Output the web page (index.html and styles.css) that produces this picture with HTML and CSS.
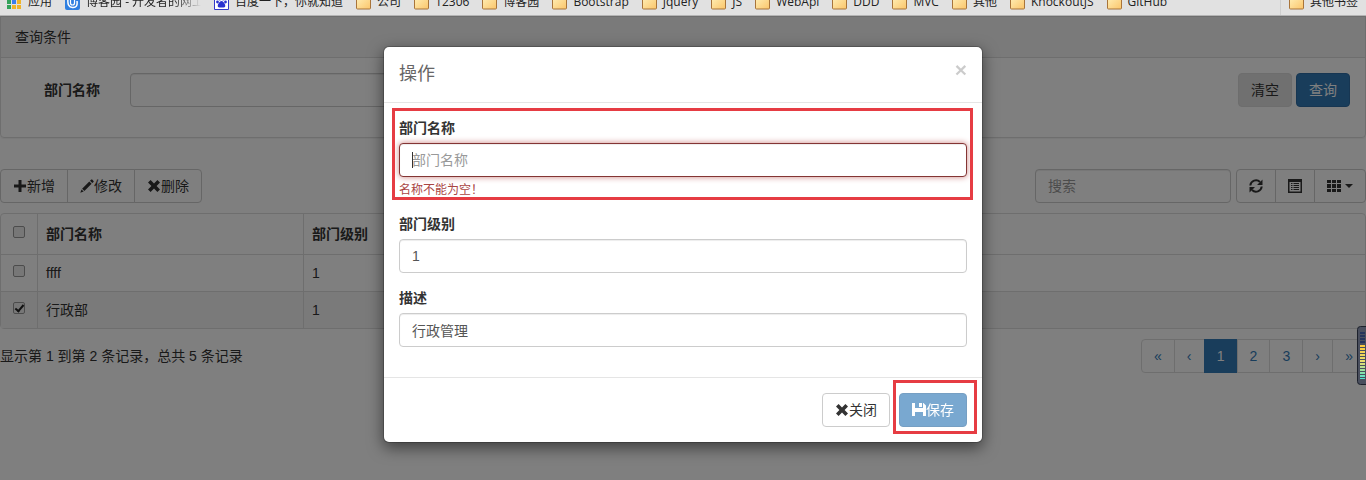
FILE: index.html
```html
<!DOCTYPE html>
<html lang="zh-CN">
<head>
    <meta charset="UTF-8">
    <meta name="viewport" content="width=device-width, initial-scale=1.0">
    <title>部门管理</title>
    <link rel="stylesheet" href="styles.css">
</head>
<body>
    <!-- 图标 -->
    <svg class="sprite" aria-hidden="true">
        <linearGradient id="folder-fill" x1="0" y1="0" x2="1" y2="1">
            <stop offset="0" stop-color="#fff0b8"/>
            <stop offset="1" stop-color="#fbc56a"/>
        </linearGradient>
        <linearGradient id="meter-fill" x1="0" y1="0" x2="0" y2="1">
            <stop offset="0" stop-color="#ffc93c"/>
            <stop offset=".5" stop-color="#e6e070"/>
            <stop offset="1" stop-color="#4fe0d0"/>
        </linearGradient>
        <symbol id="i-folder" viewBox="0 0 15 14">
            <path d="M.5 2.5q0-1 1-1h4l1 1.500h7q1 0 1 1v8.500q0 1-1 1h-12q-1 0-1-1z" fill="url(#folder-fill)" stroke="#a8743a"/>
        </symbol>
        <symbol id="i-plus" viewBox="0 0 14 14"><path d="M5.500 1h3v4.500H13v3H8.500V13h-3V8.500H1v-3h4.500z"/></symbol>
        <symbol id="i-pencil" viewBox="0 0 14 14"><path d="M11.200.6q.5-.4 1 0l1.300 1.300q.5.500 0 1l-1.200 1.200-2.300-2.300zM9.300 2.500l2.300 2.300-7.200 7.200-2.300-2.300zM1.500 10.400l2.200 2.200L.3 13.700z"/></symbol>
        <symbol id="i-remove" viewBox="0 0 14 14"><path d="M3.600 1L7 4.400 10.400 1 13 3.600 9.600 7 13 10.400 10.400 13 7 9.600 3.600 13 1 10.400 4.400 7 1 3.600z"/></symbol>
        <symbol id="i-save" viewBox="0 0 14 14"><path d="M0 0h3v5h8V0h.5L14 2.500V13h-3V9H3v4H0zM7 0h3v4H7z"/><path d="M2 5h10v4H2z"/></symbol>
        <symbol id="i-refresh" viewBox="0 0 14 14">
            <path d="M1.300 6.500A5.700 5.700 0 0 1 11 3M12.700 7.500A5.700 5.700 0 0 1 3 11" fill="none" stroke="currentColor" stroke-width="2"/>
            <path d="M13.500.5V6H8zM.5 13.500V8H6z"/>
        </symbol>
        <symbol id="i-list" viewBox="0 0 14 14">
            <path d="M0 0h14v14H0zM1.500 3v9.500h11V3z" fill-rule="evenodd"/>
            <path d="M3 4h1.500v1H3zM5.500 4H11v1H5.500zM3 6h1.500v1H3zM5.500 6H11v1H5.500zM3 8h1.500v1H3zM5.500 8H11v1H5.500zM3 10h1.500v1H3zM5.500 10H11v1H5.500z"/>
        </symbol>
        <symbol id="i-th" viewBox="0 0 14 14"><path d="M0 1h4v3H0zM5 1h4v3H5zM10 1h4v3h-4zM0 5h4v4H0zM5 5h4v4H5zM10 5h4v4h-4zM0 10h4v3H0zM5 10h4v3H5zM10 10h4v3h-4z"/></symbol>
    </svg>

    <nav class="bookmarks">
        <a href="#" class="bookmark">
            <svg viewBox="0 0 15 15"><path d="M0 0h4v4H0z" fill="#e0483e"/><path d="M5 0h4v4H5z" fill="#e0483e"/><path d="M10 0h4v4h-4z" fill="#e0483e"/><path d="M0 5h4v4H0z" fill="#34a35a"/><path d="M5 5h4v4H5z" fill="#3b7ded"/><path d="M10 5h4v4h-4zM5 10h4v4H5zM10 10h4v4h-4z" fill="#f0b429"/><path d="M0 10h4v4H0z" fill="#34a35a"/></svg>
            应用
        </a>
        <a href="#" class="bookmark bookmark-fade">
            <svg viewBox="0 0 15 15"><rect width="15" height="15" rx="2" fill="#2f7fe0"/><path d="M3 4q-1 8 4.500 8.500T12 6" fill="none" stroke="#fff" stroke-width="1.500"/><path d="M5.500 5v3q0 2 2 2t2-2V3" fill="none" stroke="#fff" stroke-width="1.200"/></svg>
            <span>博客园 - 开发者的网上家园</span>
        </a>
        <a href="#" class="bookmark">
            <svg viewBox="0 0 15 15"><path d="M.5.5h14v14H.5z" fill="#fff" stroke="#3238c8"/><path d="M7.500 6q2 0 3.500 3.500 1 3-1.500 3h-4q-2.500 0-1.500-3Q5.500 6 7.500 6z" fill="#2a32d0"/><circle cx="3.500" cy="7" r="1.400" fill="#2a32d0"/><circle cx="11.500" cy="7" r="1.400" fill="#2a32d0"/><circle cx="5.800" cy="4" r="1.400" fill="#2a32d0"/><circle cx="9.200" cy="4" r="1.400" fill="#2a32d0"/></svg>
            百度一下，你就知道
        </a>
        <a href="#" class="bookmark"><svg><use href="#i-folder"/></svg>公司</a>
        <a href="#" class="bookmark"><svg><use href="#i-folder"/></svg>12306</a>
        <a href="#" class="bookmark"><svg><use href="#i-folder"/></svg>博客园</a>
        <a href="#" class="bookmark"><svg><use href="#i-folder"/></svg>Bootstrap</a>
        <a href="#" class="bookmark"><svg><use href="#i-folder"/></svg>Jquery</a>
        <a href="#" class="bookmark"><svg><use href="#i-folder"/></svg>JS</a>
        <a href="#" class="bookmark"><svg><use href="#i-folder"/></svg>WebApi</a>
        <a href="#" class="bookmark"><svg><use href="#i-folder"/></svg>DDD</a>
        <a href="#" class="bookmark"><svg><use href="#i-folder"/></svg>MVC</a>
        <a href="#" class="bookmark"><svg><use href="#i-folder"/></svg>其他</a>
        <a href="#" class="bookmark"><svg><use href="#i-folder"/></svg>KnockoutJS</a>
        <a href="#" class="bookmark"><svg><use href="#i-folder"/></svg>GitHub</a>
        <a href="#" class="bookmark bookmark-other"><svg><use href="#i-folder"/></svg>其他书签</a>
    </nav>

    <main class="page">
        <section class="panel">
            <div class="panel-heading">查询条件</div>
            <form class="panel-body">
                <label for="search-name">部门名称</label>
                <input type="text" class="form-control" id="search-name">
                <div class="query-buttons">
                    <button type="button" class="btn btn-gray">清空</button>
                    <button type="button" class="btn btn-primary">查询</button>
                </div>
            </form>
        </section>

        <div class="toolbar">
            <div class="btn-group">
                <button type="button" class="btn"><svg class="icon"><use href="#i-plus"/></svg>新增</button>
                <button type="button" class="btn"><svg class="icon"><use href="#i-pencil"/></svg>修改</button>
                <button type="button" class="btn"><svg class="icon"><use href="#i-remove"/></svg>删除</button>
            </div>
            <div class="toolbar-right">
                <input type="text" class="form-control" placeholder="搜索" aria-label="搜索">
                <div class="btn-group">
                    <button type="button" class="btn" aria-label="刷新"><svg class="icon"><use href="#i-refresh"/></svg></button>
                    <button type="button" class="btn" aria-label="切换"><svg class="icon"><use href="#i-list"/></svg></button>
                    <button type="button" class="btn" aria-label="列"><svg class="icon"><use href="#i-th"/></svg><span class="caret"></span></button>
                </div>
            </div>
        </div>

        <div class="table-box">
            <table>
                <colgroup>
                    <col class="col-check">
                    <col class="col-name">
                    <col class="col-level">
                    <col>
                </colgroup>
                <thead>
                    <tr>
                        <th class="check"><input type="checkbox" aria-label="全选"></th>
                        <th>部门名称</th>
                        <th>部门级别</th>
                        <th>描述</th>
                    </tr>
                </thead>
                <tbody>
                    <tr>
                        <td class="check"><input type="checkbox" aria-label="ffff"></td>
                        <td>ffff</td>
                        <td>1</td>
                        <td></td>
                    </tr>
                    <tr class="selected">
                        <td class="check"><input type="checkbox" aria-label="行政部" checked></td>
                        <td>行政部</td>
                        <td>1</td>
                        <td>行政管理</td>
                    </tr>
                </tbody>
            </table>
        </div>

        <div class="table-footer">
            <span>显示第 1 到第 2 条记录，总共 5 条记录</span>
            <nav class="pagination">
                <a href="#">«</a>
                <a href="#">‹</a>
                <a href="#" class="active">1</a>
                <a href="#">2</a>
                <a href="#">3</a>
                <a href="#">›</a>
                <a href="#">»</a>
            </nav>
        </div>

        <!-- 编辑弹窗 -->
        <div class="backdrop">
            <div class="modal" role="dialog" aria-labelledby="modal-title">
                <div class="modal-header">
                    <h4 id="modal-title">操作</h4>
                    <button type="button" class="close" aria-label="关闭">×</button>
                </div>
                <div class="modal-body">
                    <div class="form-group has-error marked">
                        <label for="name">部门名称</label>
                        <div class="input-wrap">
                            <input type="text" class="form-control" id="name" placeholder="部门名称">
                            <span class="text-cursor"></span>
                        </div>
                        <small class="help-block">名称不能为空！</small>
                    </div>
                    <div class="form-group">
                        <label for="level">部门级别</label>
                        <input type="text" class="form-control" id="level" value="1">
                    </div>
                    <div class="form-group">
                        <label for="desc">描述</label>
                        <input type="text" class="form-control" id="desc" value="行政管理">
                    </div>
                </div>
                <div class="modal-footer">
                    <button type="button" class="btn"><svg class="icon"><use href="#i-remove"/></svg>关闭</button>
                    <div class="save marked">
                        <button type="button" class="btn btn-primary" disabled><svg class="icon"><use href="#i-save"/></svg>保存</button>
                    </div>
                </div>
            </div>
        </div>

        <svg class="meter" viewBox="0 0 9 59" aria-hidden="true">
            <rect x=".5" y=".5" width="12" height="58" rx="3" fill="#4a4f5e" stroke="#1d212c"/>
            <path d="M5.500 6v12" stroke="#26345c" stroke-width="5" stroke-dasharray="2 1"/>
            <rect x="3" y="19" width="5" height="34" fill="url(#meter-fill)"/>
            <path d="M5.500 21v32" stroke="#4a4f5e" stroke-width="5" stroke-dasharray="1 2"/>
        </svg>
    </main>
</body>
</html>
```

FILE: styles.css
```css
* {
    box-sizing: border-box;
}

html, body {
    height: 100%;
}

body {
    margin: 0;
    display: flex;
    flex-direction: column;
    overflow: hidden;
    font-family: "Liberation Sans", "Noto Sans CJK SC", sans-serif;
    font-size: 14px;
    line-height: 20px;
    color: #333;
    background: #fff;
}

input, button {
    font-family: inherit;
    font-size: 14px;
    line-height: 20px;
}

.sprite {
    position: absolute;
    width: 0;
    height: 0;
}

/* 书签栏 */
.bookmarks {
    display: flex;
    align-items: flex-end;
    gap: 13px;
    height: 16px;
    flex-shrink: 0;
    padding: 0 8px 0 7px;
    overflow: hidden;
    background: #e1e1e1;
    border-bottom: 1px solid #b4b4b4;
    font-family: "Open Sans", "Noto Sans CJK SC", sans-serif;
    font-size: 12px;
    line-height: 26px;
}

.bookmark {
    display: flex;
    align-items: center;
    gap: 6px;
    height: 26px;
    color: #222;
    text-decoration: none;
    white-space: nowrap;
}

.bookmark svg {
    width: 15px;
    height: 15px;
    flex-shrink: 0;
}

.bookmark-fade {
    width: 136px;
    overflow: hidden;
    -webkit-mask-image: linear-gradient(to right, #000 80%, transparent);
    mask-image: linear-gradient(to right, #000 80%, transparent);
}

.bookmark-other {
    margin-left: auto;
    padding-left: 8px;
    border-left: 1px solid #cfcfcf;
}

/* 页面 */
.page {
    position: relative;
    flex: 1;
}

.panel {
    margin-bottom: 31px;
    border: 1px solid #ddd;
    border-radius: 0 0 4px 4px;
    box-shadow: 0 1px 1px rgba(0, 0, 0, 0.05);
}

.panel-heading {
    padding: 10px 14px;
    background: #f5f5f5;
    border-bottom: 1px solid #ddd;
}

.panel-body {
    display: flex;
    padding: 15px 15px 30px;
}

.panel-body label {
    width: 84px;
    margin-right: 30px;
    padding-top: 7px;
    text-align: right;
    font-weight: bold;
}

.panel-body .form-control {
    width: 25%;
}

.query-buttons {
    display: flex;
    gap: 4px;
    margin-left: auto;
}

.form-control {
    display: block;
    width: 100%;
    height: 34px;
    padding: 6px 12px;
    color: #555;
    background: #fff;
    border: 1px solid #ccc;
    border-radius: 4px;
    box-shadow: inset 0 1px 1px rgba(0, 0, 0, 0.075);
}

.form-control::placeholder {
    color: #999;
    opacity: 1;
}

.btn {
    display: inline-flex;
    align-items: center;
    height: 34px;
    padding: 6px 12px;
    color: #333;
    background: #fff;
    border: 1px solid #ccc;
    border-radius: 4px;
    white-space: nowrap;
    cursor: pointer;
}

.btn-gray {
    background: #e0e0e0;
    border-color: #dadada;
}

.btn-primary {
    color: #fff;
    background: #337ab7;
    border-color: #2e6da4;
}

.btn:disabled {
    opacity: 0.65;
}

.icon {
    width: 14px;
    height: 14px;
    fill: currentColor;
}

.caret {
    margin-left: 4px;
    border-top: 4px solid;
    border-left: 4px solid transparent;
    border-right: 4px solid transparent;
}

.btn-group {
    display: flex;
}

.btn-group .btn {
    border-radius: 0;
}

.btn-group .btn + .btn {
    margin-left: -1px;
}

.btn-group .btn:first-child {
    border-radius: 4px 0 0 4px;
}

.btn-group .btn:last-child {
    border-radius: 0 4px 4px 0;
}

.toolbar, .table-footer {
    display: flex;
    justify-content: space-between;
    align-items: center;
}

.toolbar {
    margin-bottom: 10px;
}

.toolbar-right {
    display: flex;
    gap: 5px;
}

.toolbar-right .form-control {
    width: 196px;
}

/* 表格 */
.table-box {
    margin-bottom: 10px;
    border: 1px solid #ddd;
    border-radius: 4px;
}

table {
    width: 100%;
    table-layout: fixed;
    border-collapse: separate;
    border-spacing: 0;
}

.col-check {
    width: 37px;
}

.col-name {
    width: 266px;
}

.col-level {
    width: 20%;
}

th, td {
    padding: 8px;
    text-align: left;
    border-right: 1px solid #ddd;
}

th:nth-child(n + 3), td:nth-child(n + 3) {
    border-right: 0;
}

th {
    padding: 10px 8px;
}

td {
    border-top: 1px solid #ddd;
}

.selected td {
    background: #f5f5f5;
}

.check {
    text-align: center;
    line-height: 0;
    vertical-align: top;
}

.check input {
    appearance: none;
    width: 12px;
    height: 12px;
    margin: 2px 0 0;
    background: #eee;
    border: 1px solid #999;
    border-radius: 2px;
}

.check input:checked::after {
    content: "";
    display: block;
    box-sizing: border-box;
    width: 5px;
    height: 9px;
    margin-left: 3px;
    border: solid #222;
    border-width: 0 2px 2px 0;
    transform: rotate(40deg);
}

.pagination {
    display: flex;
}

.pagination a {
    min-width: 31px;
    height: 34px;
    padding: 6px 12px;
    margin-left: -1px;
    color: #337ab7;
    border: 1px solid #ddd;
    text-decoration: none;
}

.pagination a:first-child {
    border-radius: 4px 0 0 4px;
}

.pagination a:last-child {
    border-radius: 0 4px 4px 0;
}

.pagination .active {
    color: #fff;
    background: #337ab7;
    border-color: #337ab7;
}

/* 弹窗 */
.backdrop {
    position: absolute;
    inset: 0;
    display: flex;
    justify-content: center;
    align-items: flex-start;
    padding-top: 30px;
    background: rgba(0, 0, 0, 0.5);
}

.modal {
    width: 600px;
    max-width: 100%;
    background: #fff;
    background-clip: padding-box;
    border: 1px solid rgba(0, 0, 0, 0.2);
    border-radius: 6px;
    box-shadow: 0 5px 15px rgba(0, 0, 0, 0.5);
}

.modal-header {
    display: flex;
    justify-content: space-between;
    padding: 15px;
    border-bottom: 1px solid #e5e5e5;
}

.modal-header h4 {
    margin: 0;
    font-size: 18px;
    font-weight: normal;
    line-height: 25px;
    color: #666;
}

.close {
    height: 20px;
    margin-top: -2px;
    padding: 0;
    color: #000;
    background: none;
    border: 0;
    font-size: 21px;
    font-weight: bold;
    line-height: 20px;
    opacity: 0.2;
    cursor: pointer;
}

.modal-body {
    padding: 15px;
}

.form-group {
    margin-bottom: 15px;
}

.form-group label {
    display: block;
    margin-bottom: 5px;
    font-weight: bold;
}

.input-wrap {
    position: relative;
}

.text-cursor {
    position: absolute;
    top: 9px;
    left: 13px;
    width: 1px;
    height: 16px;
    background: #333;
}

.has-error .form-control {
    border-color: #843534;
    box-shadow: inset 0 1px 1px rgba(0, 0, 0, 0.075), 0 0 6px #ce8483;
}

.help-block {
    display: block;
    padding-top: 5px;
    color: #a94442;
    font-size: 12px;
    line-height: 17px;
}

.modal-footer {
    display: flex;
    justify-content: flex-end;
    gap: 9px;
    padding: 15px;
    border-top: 1px solid #e5e5e5;
}

/* 红色标注框 */
.marked {
    position: relative;
}

.marked::after {
    content: "";
    position: absolute;
    inset: -10px -6px -1px -7px;
    border: 3px solid #e63c43;
    pointer-events: none;
}

.save::after {
    inset: -13px -10px -7px -6px;
}

/* 右侧悬浮条 */
.meter {
    position: absolute;
    top: 310px;
    right: 0;
    width: 9px;
    height: 59px;
}
```
